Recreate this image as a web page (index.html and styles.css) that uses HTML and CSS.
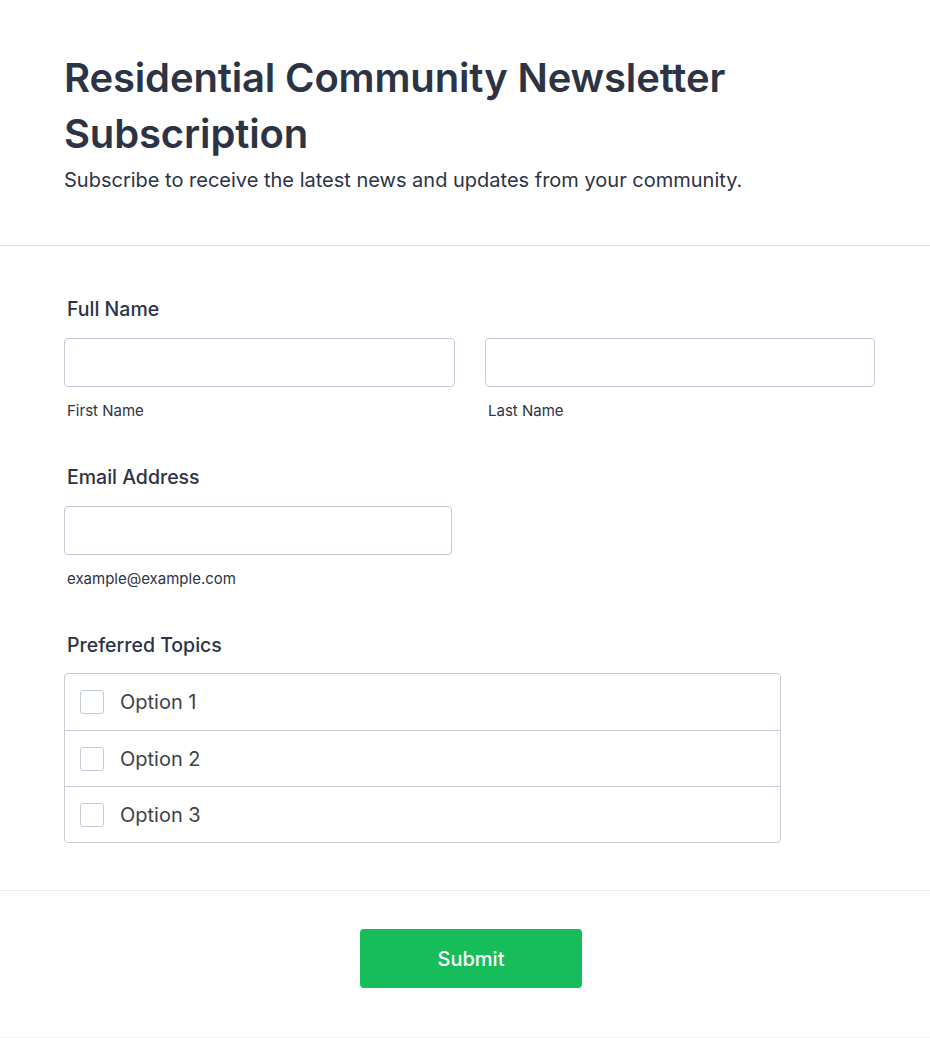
FILE: index.html
```html
<!DOCTYPE html>
<html lang="en">
<head>
<meta charset="utf-8">
<title>Residential Community Newsletter Subscription</title>
<link rel="stylesheet" href="styles.css">
</head>
<body>
<form class="form">
  <header class="form-header">
    <h1 class="title">Residential Community Newsletter Subscription</h1>
    <p class="subtitle">Subscribe to receive the latest news and updates from your community.</p>
  </header>
  <section class="form-body">
    <div class="field">
      <label class="label">Full Name</label>
      <div class="name-row">
        <div class="sub">
          <input class="input" type="text">
          <span class="sublabel">First Name</span>
        </div>
        <div class="sub">
          <input class="input" type="text">
          <span class="sublabel">Last Name</span>
        </div>
      </div>
    </div>
    <div class="field">
      <label class="label">Email Address</label>
      <div class="sub email">
        <input class="input" type="email">
        <span class="sublabel">example@example.com</span>
      </div>
    </div>
    <div class="field">
      <label class="label">Preferred Topics</label>
      <div class="options">
        <label class="option"><span class="box"></span><span class="opt-text">Option 1</span></label>
        <label class="option"><span class="box"></span><span class="opt-text">Option 2</span></label>
        <label class="option"><span class="box"></span><span class="opt-text">Option 3</span></label>
      </div>
    </div>
  </section>
  <footer class="form-footer">
    <button type="button" class="submit">Submit</button>
  </footer>
</form>
</body>
</html>
```
FILE: styles.css
```css
* { box-sizing: border-box; }
html, body { margin: 0; padding: 0; background: #fff; }
body {
  font-family: Inter, "Noto Sans", sans-serif;
  color: #2c3345;
}
.form {
  width: 930px;
  min-height: 1038px;
  border-bottom: 1px solid #f3f3f6;
}
.form-header {
  padding: 50px 55px 51px 64px;
  border-bottom: 1px solid #e0e0e6;
}
.title {
  margin: 0;
  font-size: 40px;
  line-height: 56px;
  font-weight: 600;
  color: #2c3345;
  letter-spacing: -0.15px;
}
.subtitle {
  margin: 4px 0 0;
  font-size: 20px;
  line-height: 28px;
  color: #2c3345;
}
.form-body {
  padding: 51px 55px 47px 64px;
  border-bottom: 1px solid #eaeaef;
  display: flex;
  flex-direction: column;
  gap: 44px;
}
.field { display: flex; flex-direction: column; }
.label {
  font-size: 19.5px;
  line-height: 24px;
  font-weight: 500;
  padding-left: 3px;
  margin-bottom: 17px;
}
.name-row {
  display: grid;
  grid-template-columns: 391px 390px;
  gap: 30px;
}
.sub { display: flex; flex-direction: column; }
.email { width: 388px; }
.input {
  height: 49px;
  width: 100%;
  border: 1px solid #c3cad8;
  border-radius: 4px;
  background: #fff;
  font: inherit;
}
.sublabel {
  margin-top: 14px;
  padding-left: 3px;
  font-size: 15px;
  line-height: 20px;
  color: #2c3345;
}
.options {
  width: 717px;
  border: 1px solid #c9ccd4;
  border-radius: 4px;
  display: flex;
  flex-direction: column;
  margin-top: -1px;
}
.option {
  height: 56px;
  display: flex;
  align-items: center;
  padding-left: 15px;
  gap: 16px;
  border-top: 1px solid #c9ccd4;
}
.option:first-child { border-top: none; }
.box {
  width: 24px;
  height: 24px;
  border: 1px solid #c3cad8;
  border-radius: 3px;
  background: #fff;
}
.opt-text {
  font-size: 20px;
  color: #414246;
}
.form-footer {
  display: flex;
  justify-content: center;
  padding: 38px 0 48px;
}
.submit {
  width: 222px;
  height: 59px;
  background: #18bd5b;
  border: none;
  border-radius: 4px;
  color: #fff;
  font-family: inherit;
  font-size: 20px;
  font-weight: 500;
  margin-left: 12px;
}
```
